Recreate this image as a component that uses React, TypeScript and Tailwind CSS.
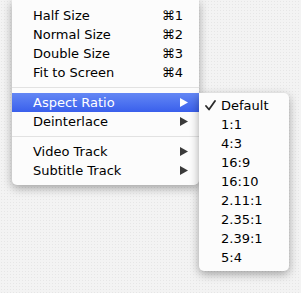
import React from "react";

type Item = { label: string; shortcut?: string; submenu?: boolean; active?: boolean } | "sep";

const mainItems: Item[] = [
  { label: "Half Size", shortcut: "⌘1" },
  { label: "Normal Size", shortcut: "⌘2" },
  { label: "Double Size", shortcut: "⌘3" },
  { label: "Fit to Screen", shortcut: "⌘4" },
  "sep",
  { label: "Aspect Ratio", submenu: true, active: true },
  { label: "Deinterlace", submenu: true },
  "sep",
  { label: "Video Track", submenu: true },
  { label: "Subtitle Track", submenu: true },
];

const ratios = ["Default", "1:1", "4:3", "16:9", "16:10", "2.11:1", "2.35:1", "2.39:1", "5:4"];

function Arrow({ white }: { white?: boolean }) {
  return (
    <svg width="8" height="9" viewBox="0 0 8 9" className="shrink-0">
      <path d="M0 0 L8 4.5 L0 9 Z" fill={white ? "#ffffff" : "#3a3a3a"} />
    </svg>
  );
}

function Check() {
  return (
    <svg width="11" height="11" viewBox="0 0 11 11">
      <path d="M1 6 L4 9.5 L10 1" fill="none" stroke="#2a2a2a" strokeWidth="1.8" strokeLinecap="round" strokeLinejoin="round" />
    </svg>
  );
}

export default function App() {
  return (
    <div
      className="relative w-[301px] h-[293px] overflow-hidden bg-[#f3f3f3] bg-[radial-gradient(#e6e6e6_0.7px,transparent_0.8px)] bg-[length:3px_3px] text-[13px] text-black"
      style={{ fontFamily: '"DejaVu Sans", "Liberation Sans", sans-serif' }}
    >
      <div className="absolute left-[12px] top-0 w-[187px] pt-[6px] pb-[5px] bg-[#fcfcfc] rounded-b-[5px] shadow-[0_3px_10px_rgba(0,0,0,0.35)]">
        {mainItems.map((it, i) =>
          it === "sep" ? (
            <div key={i} className="h-[11px] flex items-center">
              <div className="w-full h-px bg-[#e2e2e2]" />
            </div>
          ) : (
            <div
              key={i}
              className={`h-[19px] flex items-center pl-[21px] ${
                it.active ? "bg-gradient-to-b from-[#6487f4] to-[#3a5fec] text-white" : ""
              } ${it.submenu ? "pr-[11px]" : "pr-[16px]"}`}
            >
              <span className="flex-1 leading-none">{it.label}</span>
              {it.shortcut && <span className="leading-none">{it.shortcut}</span>}
              {it.submenu && <Arrow white={it.active} />}
            </div>
          )
        )}
      </div>

      <div className="absolute left-[199px] top-[93px] w-[90px] pt-[3px] pb-[4px] bg-[#fcfcfc] rounded-[5px] rounded-tl-none shadow-[0_3px_10px_rgba(0,0,0,0.35)]">
        {ratios.map((r, i) => (
          <div key={r} className="h-[19px] flex items-center pl-[6px]">
            <span className="w-[16px] flex items-center">{i === 0 ? <Check /> : null}</span>
            <span className="leading-none">{r}</span>
          </div>
        ))}
      </div>
    </div>
  );
}
